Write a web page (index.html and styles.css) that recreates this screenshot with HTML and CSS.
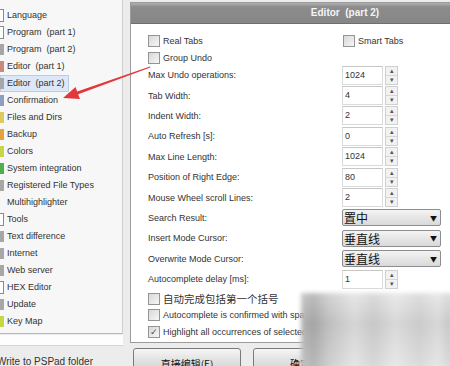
FILE: index.html
```html
<!DOCTYPE html>
<html lang="en">
<head>
  <meta charset="UTF-8">
  <link rel="stylesheet" href="styles.css">
  <title>Editor (part 2)</title>
</head>
<body>
  <div class="dialog">
    <div class="side">
      <ul class="tree">
        <li><span class="ico ico-box"></span>Language</li>
        <li><span class="ico ico-box"></span>Program&nbsp; (part 1)</li>
        <li><span class="ico ico-gray"></span>Program&nbsp; (part 2)</li>
        <li><span class="ico ico-red"></span>Editor&nbsp; (part 1)</li>
        <li class="selected"><span class="ico ico-gray"></span>Editor&nbsp; (part 2)</li>
        <li><span class="ico ico-blue"></span>Confirmation</li>
        <li><span class="ico ico-yellow"></span>Files and Dirs</li>
        <li><span class="ico ico-orange"></span>Backup</li>
        <li><span class="ico ico-lime"></span>Colors</li>
        <li><span class="ico ico-green"></span>System integration</li>
        <li><span class="ico ico-gray"></span>Registered File Types</li>
        <li><span class="ico"></span>Multihighlighter</li>
        <li><span class="ico ico-box"></span>Tools</li>
        <li><span class="ico ico-gray"></span>Text difference</li>
        <li><span class="ico ico-gray"></span>Internet</li>
        <li><span class="ico ico-gray"></span>Web server</li>
        <li><span class="ico ico-box"></span>HEX Editor</li>
        <li><span class="ico ico-gray"></span>Update</li>
        <li><span class="ico ico-lime"></span>Key Map</li>
      </ul>
      <div class="side-box"></div>
      <div class="side-note">Write to PSPad folder</div>
    </div>

    <div class="main">
      <div class="panel">
        <div class="panel-head">Editor&nbsp; (part 2)</div>
        <div class="panel-body">
          <div class="check-row">
            <label class="check"><span class="box"></span>Real Tabs</label>
            <label class="check"><span class="box"></span>Smart Tabs</label>
          </div>
          <div class="check-row">
            <label class="check"><span class="box"></span>Group Undo</label>
          </div>

          <div class="fields">
            <div class="field"><span>Max Undo operations:</span><span class="num"><span class="input">1024</span><span class="spin"><i>▴</i><i>▾</i></span></span></div>
            <div class="field"><span>Tab Width:</span><span class="num"><span class="input">4</span><span class="spin"><i>▴</i><i>▾</i></span></span></div>
            <div class="field"><span>Indent Width:</span><span class="num"><span class="input">2</span><span class="spin"><i>▴</i><i>▾</i></span></span></div>
            <div class="field"><span>Auto Refresh [s]:</span><span class="num"><span class="input">0</span><span class="spin"><i>▴</i><i>▾</i></span></span></div>
            <div class="field"><span>Max Line Length:</span><span class="num"><span class="input">1024</span><span class="spin"><i>▴</i><i>▾</i></span></span></div>
            <div class="field"><span>Position of Right Edge:</span><span class="num"><span class="input">80</span><span class="spin"><i>▴</i><i>▾</i></span></span></div>
            <div class="field"><span>Mouse Wheel scroll Lines:</span><span class="num"><span class="input">2</span><span class="spin"><i>▴</i><i>▾</i></span></span></div>
            <div class="field"><span>Search Result:</span><span class="select">置中<b>▼</b></span></div>
            <div class="field"><span>Insert Mode Cursor:</span><span class="select">垂直线<b>▼</b></span></div>
            <div class="field"><span>Overwrite Mode Cursor:</span><span class="select">垂直线<b>▼</b></span></div>
            <div class="field"><span>Autocomplete delay [ms]:</span><span class="num"><span class="input">1</span><span class="spin"><i>▴</i><i>▾</i></span></span></div>
          </div>

          <div class="checks">
            <label class="check cjk"><span class="box"></span>自动完成包括第一个括号</label>
            <label class="check"><span class="box"></span>Autocomplete is confirmed with space</label>
            <label class="check"><span class="box checked">✓</span>Highlight all occurrences of selected word</label>
          </div>
        </div>
      </div>
      <div class="buttons">
        <button class="button">直接编辑(E)</button>
        <button class="button">确定(O)</button>
      </div>
    </div>
  </div>

  <svg class="arrow" width="450" height="366" viewBox="0 0 450 366">
    <polygon points="63,98 75.5,87 77.2,91.4 150,66.4 150.4,67.6 78.2,94.2 80,99" fill="#e3383b"/>
  </svg>
  <div class="blur"></div>
</body>
</html>
```

FILE: styles.css
```css
body {
    margin: 0;
    width: 450px;
    height: 366px;
    overflow: hidden;
    position: relative;
    background-color: #ececec;
    font-family: "Liberation Sans", Arial, sans-serif;
    font-size: 9px;
    color: #333;
}

.dialog {
    display: flex;
    gap: 7px;
}

/* left tree */
.side {
    width: 123px;
    flex-shrink: 0;
}

.tree {
    list-style: none;
    margin: 0;
    padding: 7px 0 0 0;
    height: 326px;
    background-color: #f7f7f7;
    border-right: 1px solid #cfcfcf;
    border-bottom: 1px solid #b9b9b9;
}

.tree li {
    height: 17px;
    line-height: 17px;
    display: flex;
    align-items: center;
    white-space: nowrap;
}

.tree li.selected {
    width: 69px;
    background-color: #dce7f7;
    box-shadow: inset 0 0 0 1px #b9cdea;
}

.ico {
    width: 4px;
    height: 11px;
    margin-right: 3px;
    flex-shrink: 0;
}

.ico-box { border: 1px solid #8a8a8a; border-left: none; width: 3px; background: #fff; }
.ico-gray { background-color: #a7a7a7; }
.ico-red { background-color: #c98a7a; }
.ico-blue { background-color: #8aa0c0; }
.ico-yellow { background-color: #e0c860; }
.ico-orange { background-color: #e5a437; }
.ico-lime { background-color: #c7d645; }
.ico-green { background-color: #4fb04a; }

.side-box {
    height: 10px;
    margin-top: 1px;
    background-color: #fdfdfd;
    border-bottom: 1px solid #d4d4d4;
}

.side-note {
    margin: 10px 0 0 -3px;
    white-space: nowrap;
    font-size: 10px;
}

/* right panel */
.main {
    width: 430px;
    flex-shrink: 0;
    padding-top: 2px;
}

.panel {
    height: 341px;
    background-color: #fff;
    border: 1px solid #9c9c9c;
    box-sizing: border-box;
}

.panel-head {
    height: 20px;
    line-height: 20px;
    text-align: center;
    font-size: 10px;
    font-weight: bold;
    color: #f4f4f4;
    background: linear-gradient(#b0b0b0, #8c8c8c 20%, #868686);
    border-bottom: 1px solid #6f6f6f;
}

.panel-body {
    padding: 8px 0 0 17px;
}

.check-row {
    display: grid;
    grid-template-columns: 195px auto;
    height: 17px;
    align-items: center;
}

.check {
    display: flex;
    align-items: center;
    white-space: nowrap;
}

.box {
    width: 10px;
    height: 10px;
    margin-right: 3px;
    border: 1px solid #949494;
    background: linear-gradient(135deg, #d8d8d8, #f6f6f6);
    font-size: 9px;
    line-height: 10px;
    text-align: center;
    color: #2a4a80;
    flex-shrink: 0;
}

.fields {
    margin-top: -1px;
}

.field {
    display: grid;
    grid-template-columns: 194px auto;
    height: 20.4px;
    align-items: center;
}

.num {
    display: flex;
    align-items: center;
}

.input {
    width: 37px;
    height: 17px;
    line-height: 17px;
    padding-left: 2px;
    border: 1px solid #dadada;
    border-top-color: #c6c6c6;
}

.spin {
    display: flex;
    flex-direction: column;
    width: 11px;
    height: 17px;
    margin-left: 2px;
    border: 1px solid #d0d0d0;
    background-color: #f2f2f2;
}

.spin i {
    flex: 1;
    font-style: normal;
    font-size: 7px;
    line-height: 8px;
    text-align: center;
    color: #555;
}

.spin i + i {
    border-top: 1px solid #d6d6d6;
}

.select {
    width: 99px;
    height: 17px;
    display: flex;
    align-items: center;
    justify-content: space-between;
    padding: 0 3px 0 1px;
    box-sizing: border-box;
    border: 1px solid #8d8d8d;
    border-radius: 2px;
    background: linear-gradient(#f4f4f4, #e6e6e6 50%, #d9d9d9);
    font-family: "Noto Sans CJK SC", sans-serif;
    font-size: 12px;
    color: #111;
}

.select b {
    font-size: 7px;
    color: #111;
}

.checks {
    margin-top: 1px;
}

.checks .check {
    height: 16.5px;
}

.cjk {
    font-family: "Noto Sans CJK SC", sans-serif;
    font-size: 10.5px;
}

.buttons {
    display: flex;
    gap: 12px;
    margin-top: 5px;
    padding-left: 3px;
}

.button {
    width: 108px;
    height: 24px;
    border: 1px solid #7a7a7a;
    border-radius: 3px;
    background: linear-gradient(#f6f6f6, #e2e2e2 50%, #d4d4d4);
    font-family: "Noto Sans CJK SC", sans-serif;
    font-size: 10px;
    padding: 7px 0 0 0;
    color: #111;
}

/* annotation overlay */
.arrow {
    position: absolute;
    top: 0;
    left: 0;
    pointer-events: none;
}

.blur {
    position: absolute;
    left: 301px;
    top: 293px;
    width: 152px;
    height: 76px;
    background:
        linear-gradient(rgba(255,255,255,0.25), rgba(150,150,150,0.15) 40%, rgba(255,255,255,0.2)),
        linear-gradient(90deg, #b9b9b9, #a6a6a6 8%, #c4c4c4 18%, #e0e0e0 35%, #cfcfcf 48%, #e4e4e4 62%, #d3d3d3 78%, #e2e2e2 90%, #cbcbcb);
    filter: blur(2px);
}
```
